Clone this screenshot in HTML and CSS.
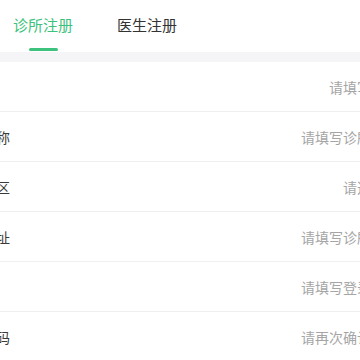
FILE: index.html
```html
<!DOCTYPE html>
<html lang="zh-CN">
<head>
  <meta charset="UTF-8" />
  <title>注册</title>
  <link rel="stylesheet" href="styles.css">
</head>
<body>

<div class="tabs">
  <div class="tab active">诊所注册<i class="bar"></i></div>
  <div class="tab">医生注册<i class="bar"></i></div>
</div>

<div class="gap"></div>

<div class="form">
  <div class="row"><label>手机号</label><div class="field end"><span>请填写手机号</span></div></div>
  <div class="row"><label>诊所名称</label><div class="field"><span>请填写诊所名称</span></div></div>
  <div class="row"><label>所在地区</label><div class="field end"><span>请选择地区</span></div></div>
  <div class="row"><label>详细地址</label><div class="field"><span>请填写诊所详细地址</span></div></div>
  <div class="row"><label>密码</label><div class="field"><span>请填写登录密码</span></div></div>
  <div class="row"><label>确认密码</label><div class="field"><span>请再次确认密码</span></div></div>
</div>

</body>
</html>
```

FILE: styles.css
```css
html, body { overflow: hidden; }
body { margin: 0; background: #fff; font-family: "Noto Sans CJK SC", "Noto Sans", sans-serif; color: #333; }

.tabs { display: flex; gap: 18px; height: 52px; }
.tab { padding: 14px 13px 0; font-size: 15px; line-height: 22px; color: #333; display: flex; flex-direction: column; align-items: center; }
.tab .bar { display: block; width: 29px; height: 3px; margin-top: 12px; border-radius: 2px; background: transparent; }
.tab.active { color: #3cc27c; }
.tab.active .bar { background: #3cc27c; }

.gap { height: 10px; background: #f5f5f8; }

.form { margin-left: -46px; width: 459px; }
.row { display: flex; align-items: center; height: 49px; border-bottom: 1px solid #efefef; font-size: 14px; }
.row label { width: 347px; color: #3a3a3a; white-space: nowrap; }
.field { width: 112px; overflow: hidden; white-space: nowrap; color: #a5a5a5; }
.field.end { text-align: right; }
```
